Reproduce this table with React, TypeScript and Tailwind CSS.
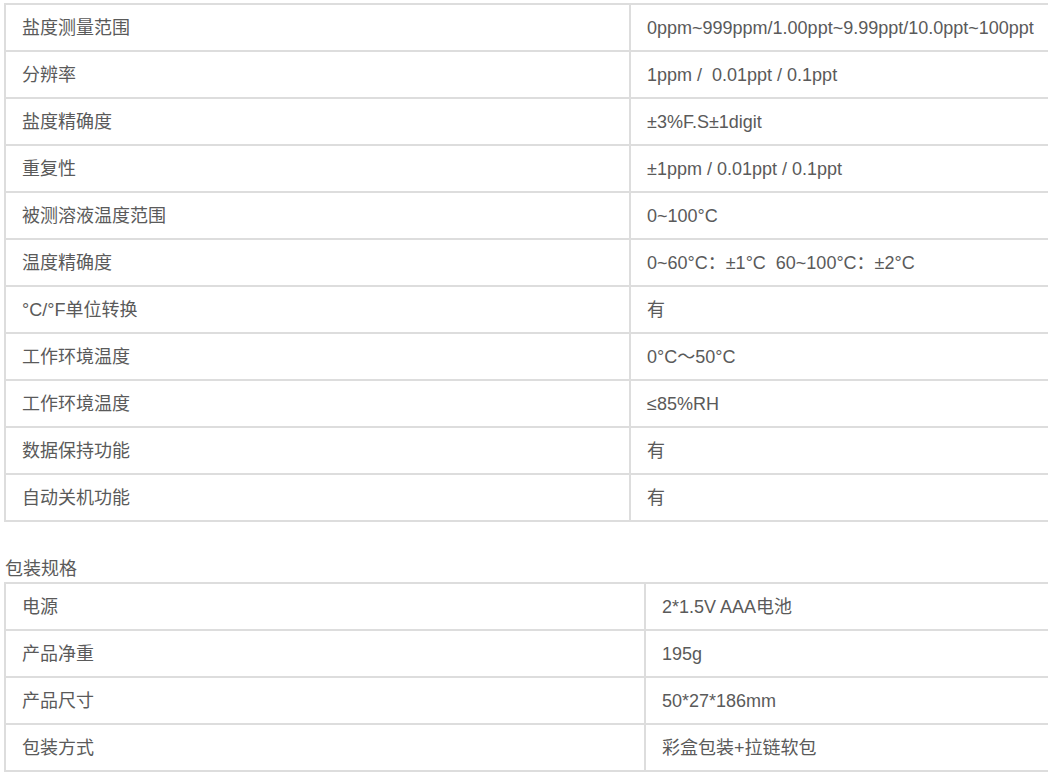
const specs: [string, string][] = [
  ["盐度测量范围", "0ppm~999ppm/1.00ppt~9.99ppt/10.0ppt~100ppt"],
  ["分辨率", "1ppm /  0.01ppt / 0.1ppt"],
  ["盐度精确度", "±3%F.S±1digit"],
  ["重复性", "±1ppm / 0.01ppt / 0.1ppt"],
  ["被测溶液温度范围", "0~100°C"],
  ["温度精确度", "0~60°C：±1°C  60~100°C：±2°C"],
  ["°C/°F单位转换", "有"],
  ["工作环境温度", "0°C～50°C"],
  ["工作环境温度", "≤85%RH"],
  ["数据保持功能", "有"],
  ["自动关机功能", "有"],
];

const packing: [string, string][] = [
  ["电源", "2*1.5V AAA电池"],
  ["产品净重", "195g"],
  ["产品尺寸", "50*27*186mm"],
  ["包装方式", "彩盒包装+拉链软包"],
];

const SpecTable = ({ rows, labelWidth }: { rows: [string, string][]; labelWidth: string }) => (
  <div className="w-[1300px] border-t-2 border-l-2 border-[#dddddd]">
    {rows.map(([k, v], i) => (
      <div key={i} className="flex h-[47px] border-b-2 border-[#dddddd]">
        <div className={`${labelWidth} shrink-0 flex items-center pl-4 pt-[2px]`}>{k}</div>
        <div className="flex-1 flex items-center pl-4 pt-[2px] border-l-2 border-[#dddddd] whitespace-pre">{v}</div>
      </div>
    ))}
  </div>
);

export default function App() {
  return (
    <div
      className="w-full h-[775px] overflow-hidden bg-white text-[18px] text-[#5a5a5a]"
      style={{ fontFamily: '"Liberation Sans", "Noto Sans CJK SC", sans-serif' }}
    >
      <div className="mt-[3px] ml-[4px]">
        <SpecTable rows={specs} labelWidth="w-[623px]" />
      </div>
      <div className="mt-[34px] ml-[5px] h-[24px] leading-[24px] pt-[1px]">包装规格</div>
      <div className="mt-[2px] ml-[4px]">
        <SpecTable rows={packing} labelWidth="w-[638px]" />
      </div>
    </div>
  );
}
